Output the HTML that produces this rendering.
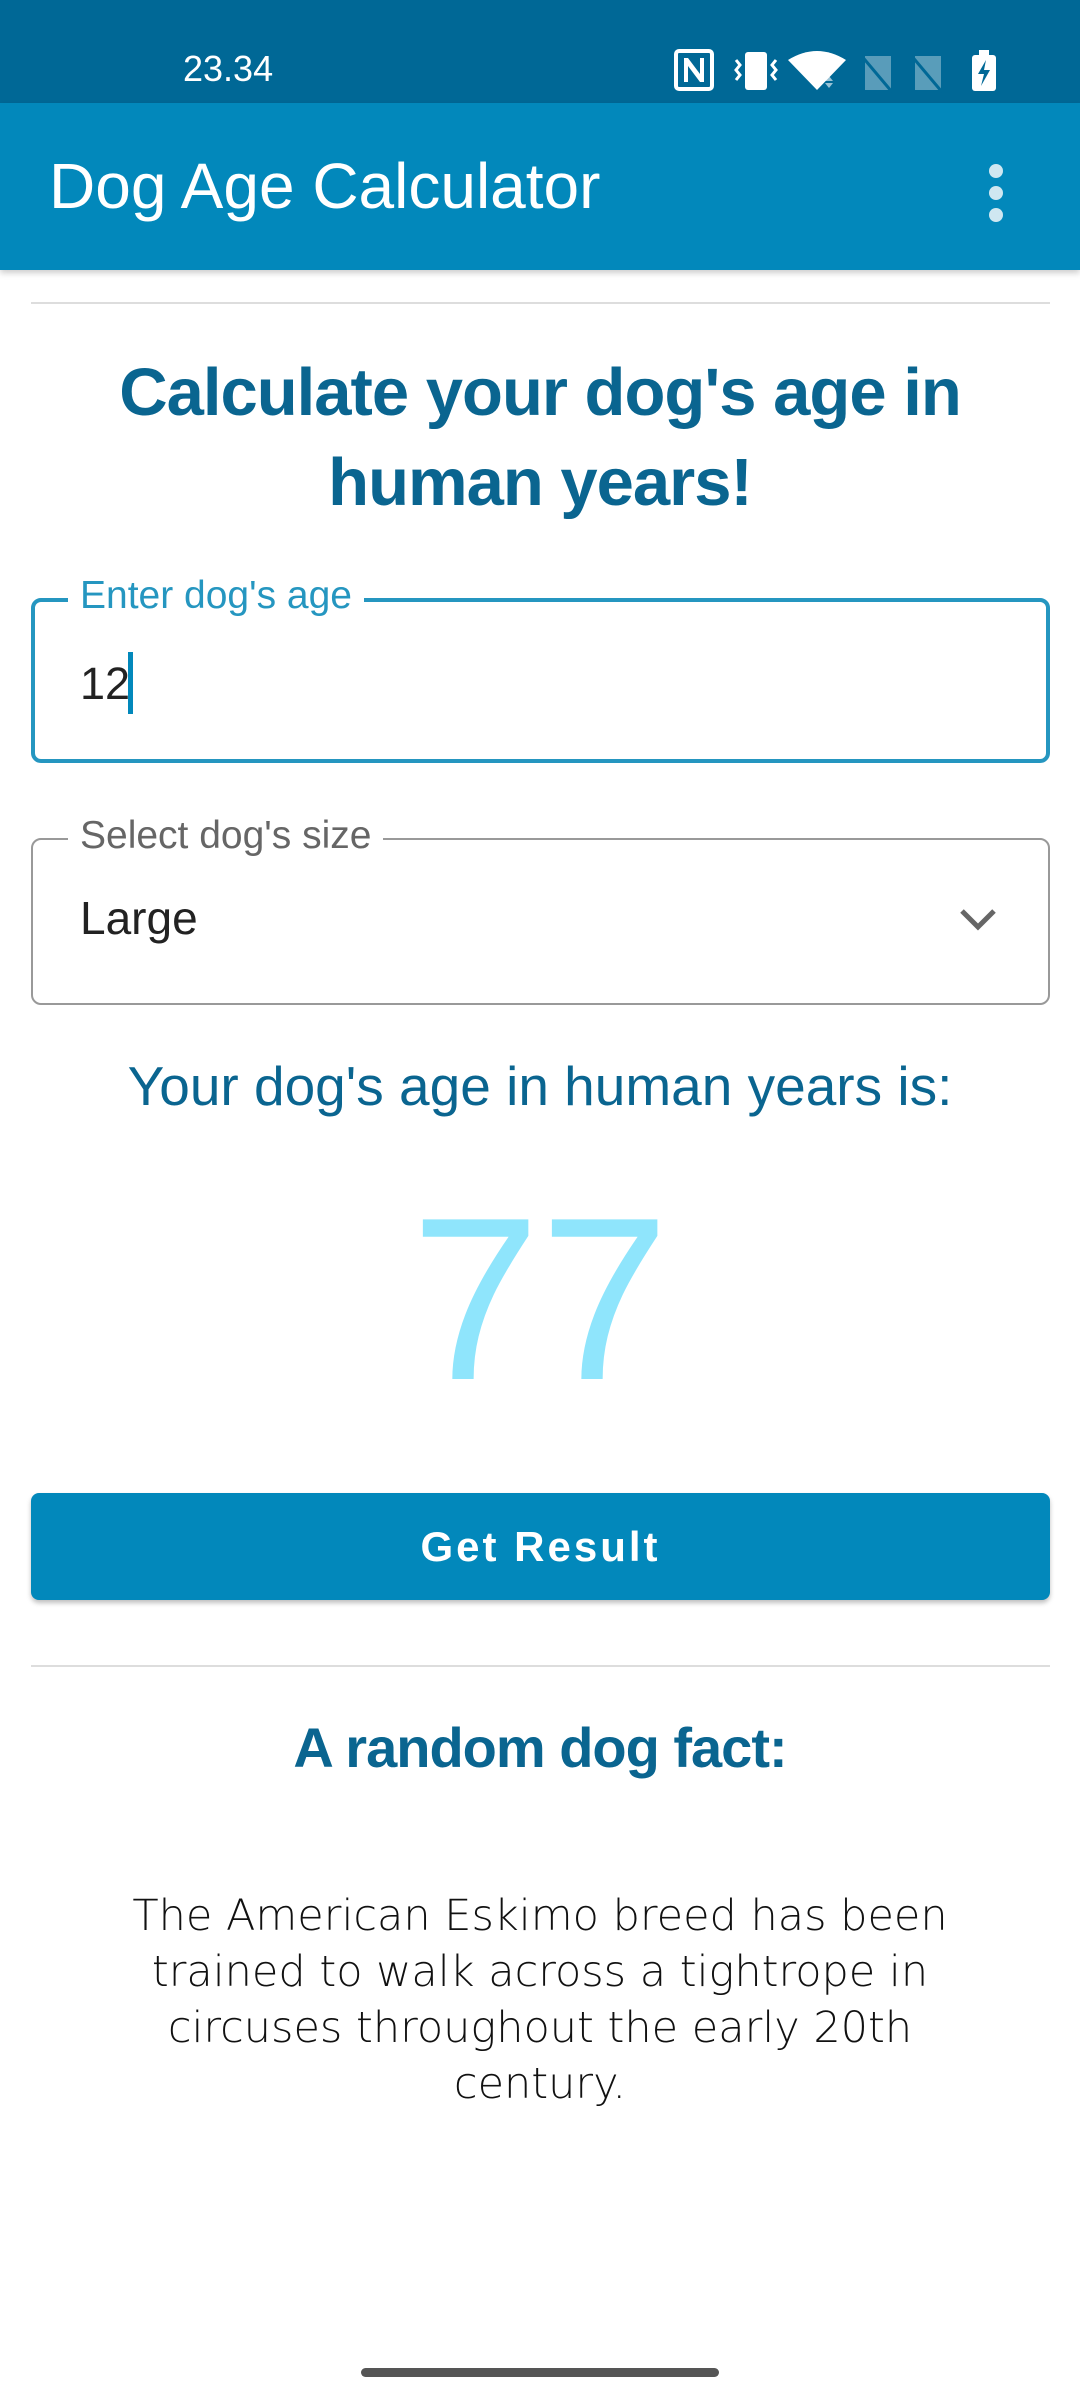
<!DOCTYPE html>
<html><head><meta charset="utf-8"><style>
*{margin:0;padding:0;box-sizing:border-box}
body{width:1080px;height:2400px;background:#fff;position:relative;overflow:hidden;font-family:"Liberation Sans",sans-serif}
.a{position:absolute}
.c{position:absolute;left:0;width:1080px;text-align:center}
</style></head><body>
<div class="a" style="left:0;top:0;width:1080px;height:103px;background:#006896"></div>
<div class="a" style="left:183px;top:47px;color:#fff;font-size:36px;line-height:44px">23.34</div>
<svg class="a" style="left:670px;top:48px" width="350" height="45" viewBox="0 0 350 45">
<g fill="#fff">
<rect x="6" y="3" width="36" height="38" rx="3" fill="none" stroke="#fff" stroke-width="4"/>
<path d="M14 10v24h4V18l12 16h4V10h-4v16L18 10z"/>
<rect x="75" y="4" width="22" height="38" rx="3"/>
<path d="M66 12l4 5-4 5 4 5-4 5M106 12l-4 5 4 5-4 5 4 5" stroke="#fff" stroke-width="3" fill="none"/>
<path d="M118 12q29-18 58 0l-29 30z"/>
<path d="M155 33l4-5 4 5zM155 35l4 5 4-5z" opacity=".6"/>
<g opacity=".35"><path d="M195 8h26v34h-26z"/><path d="M245 8h26v34h-26z"/></g>
<path d="M190 6l32 38M240 6l32 38" stroke="#006896" stroke-width="3"/>
<rect x="309" y="2" width="10" height="6"/>
<rect x="302" y="7" width="24" height="36" rx="3"/>
<path d="M316 12l-8 14h6l-3 12 9-16h-6z" fill="#006896"/>
</g></svg>
<div class="a" style="left:0;top:103px;width:1080px;height:167px;background:#0288bb;box-shadow:0 3px 6px rgba(0,0,0,.2)"></div>
<div class="a" style="left:49px;top:150px;color:#fff;font-size:64px;line-height:72px">Dog Age Calculator</div>
<div class="a" style="left:989px;top:164px;width:14px;height:14px;border-radius:7px;background:#cfe7f1"></div>
<div class="a" style="left:989px;top:186px;width:14px;height:14px;border-radius:7px;background:#cfe7f1"></div>
<div class="a" style="left:989px;top:208px;width:14px;height:14px;border-radius:7px;background:#cfe7f1"></div>

<div class="a" style="left:31px;top:302px;width:1019px;height:2px;background:#ddd"></div>
<div class="c" style="top:348px;color:#0a6590;font-weight:bold;font-size:67px;line-height:90px;letter-spacing:-1px">Calculate your dog's age in<br>human years!</div>

<div class="a" style="left:31px;top:598px;width:1019px;height:165px;border:4px solid #2596c0;border-radius:10px"></div>
<div class="a" style="left:68px;top:573px;background:#fff;padding:0 12px;color:#2596c0;font-size:39px;line-height:46px">Enter dog's age</div>
<div class="a" style="left:80px;top:658px;color:#222;font-size:45px;line-height:52px">12</div>
<div class="a" style="left:128px;top:652px;width:5px;height:62px;background:#0288bb"></div>

<div class="a" style="left:31px;top:838px;width:1019px;height:167px;border:2px solid #999;border-radius:10px"></div>
<div class="a" style="left:68px;top:813px;background:#fff;padding:0 12px;color:#666;font-size:39px;line-height:46px">Select dog's size</div>
<div class="a" style="left:80px;top:892px;color:#222;font-size:46px;line-height:52px">Large</div>
<svg class="a" style="left:958px;top:905px" width="40" height="30"><path d="M4 6l16 16 16-16" stroke="#666" stroke-width="5" fill="none"/></svg>

<div class="c" style="top:1054px;color:#0a6590;font-size:55px;line-height:64px">Your dog's age in human years is:</div>
<div class="c" style="top:1170px;color:#8fe5fc;font-size:232px;line-height:260px">77</div>

<div class="a" style="left:31px;top:1493px;width:1019px;height:107px;background:#0288bb;border-radius:8px;box-shadow:0 3px 5px rgba(0,0,0,.25);color:#fff;font-weight:bold;font-size:42px;letter-spacing:3px;line-height:107px;text-align:center">Get Result</div>

<div class="a" style="left:31px;top:1665px;width:1019px;height:2px;background:#ddd"></div>
<div class="c" style="top:1716px;color:#0a6590;font-weight:bold;font-size:56px;line-height:64px;letter-spacing:-1px">A random dog fact:</div>
<div class="a" style="left:115px;top:1888px;width:850px;text-align:center;color:#111;font-family:'DejaVu Sans',sans-serif;font-weight:200;font-size:43px;line-height:56px">The American Eskimo breed has been trained to walk across a tightrope in circuses throughout the early 20th century.</div>

<div class="a" style="left:361px;top:2368px;width:358px;height:9px;border-radius:5px;background:#555"></div>
</body></html>
